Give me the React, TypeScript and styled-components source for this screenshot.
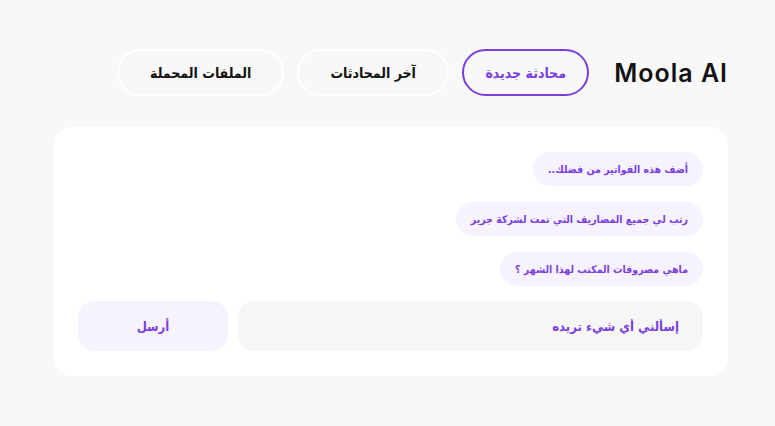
import React from 'react';
import styled, { createGlobalStyle } from 'styled-components';

const GlobalStyle = createGlobalStyle`
  html, body {
    margin: 0;
    padding: 0;
    background-color: #f8f8f8;
    font-family: 'DejaVu Sans Condensed', 'DejaVu Sans', sans-serif;
  }
`;

const messages = [
  'أضف هذه الفواتير من فضلك..',
  'رتب لي جميع المصاريف التي تمت لشركة جرير',
  'ماهي مصروفات المكتب لهذا الشهر ؟'
];

const navItems = [
  { label: 'محادثة جديدة', width: 127, active: true },
  { label: 'آخر المحادثات', width: 152, active: false },
  { label: 'الملفات المحملة', width: 167, active: false }
];

function App() {
  return (
    <>
      <GlobalStyle />
      <Page>
        <Header>
          <Logo>Moola AI</Logo>
          {navItems.map((item) => (
            <NavButton key={item.label} $active={item.active} $width={item.width}>
              {item.label}
            </NavButton>
          ))}
        </Header>
        <ChatCard>
          <MessageList>
            {messages.map((text) => (
              <Bubble key={text}>{text}</Bubble>
            ))}
          </MessageList>
          <InputRow>
            <PromptInput placeholder='إسألني أي شيء تريده' />
            <SendButton>أرسل</SendButton>
          </InputRow>
        </ChatCard>
      </Page>
    </>
  );
}
export default App;

const Page = styled.main`
  direction: rtl;
  display: flex;
  flex-direction: column;
  gap: 31px;
  width: 674px;
  margin-left: 54px;
  padding-top: 49px;
`;

const Header = styled.header`
  display: flex;
  align-items: center;
  gap: 13px;
`;

const Logo = styled.h1`
  direction: ltr;
  margin: 0 0 0 12px;
  color: #111;
  font-family: 'Inter', sans-serif;
  font-size: 25px;
  font-weight: 600;
  letter-spacing: 1px;
`;

const NavButton = styled.button<{ $active?: boolean; $width: number }>`
  width: ${(props) => props.$width}px;
  height: 47px;
  padding: 0;
  background-color: transparent;
  border: 2px solid ${(props) => (props.$active ? '#7a3fe0' : '#ffffff')};
  border-radius: 24px;
  color: ${(props) => (props.$active ? '#7a3fe0' : '#111')};
  font-family: 'DejaVu Sans Condensed', 'DejaVu Sans', sans-serif;
  font-size: 14px;
  font-weight: 700;
  cursor: pointer;
`;

const ChatCard = styled.section`
  display: flex;
  flex-direction: column;
  gap: 15px;
  padding: 25px 25px 25px 24px;
  background-color: #fff;
  border-radius: 18px;
`;

const MessageList = styled.div`
  display: flex;
  flex-direction: column;
  align-items: flex-start;
  gap: 16px;
`;

const Bubble = styled.div`
  height: 34px;
  display: flex;
  align-items: center;
  padding: 0 15px;
  background-color: #f6f2fe;
  border-radius: 17px;
  color: #7a3fe0;
  font-family: 'DejaVu Sans Condensed', 'DejaVu Sans', sans-serif;
  font-size: 10.5px;
  font-weight: 700;
`;

const InputRow = styled.div`
  display: flex;
  gap: 10px;
  height: 50px;
`;

const PromptInput = styled.input`
  flex: 1;
  padding: 0 24px;
  background-color: #f6f6f6;
  border: none;
  border-radius: 16px;
  outline: none;
  font-family: 'DejaVu Sans Condensed', 'DejaVu Sans', sans-serif;
  font-size: 13px;
  font-weight: 700;
  color: #7a3fe0;
  &::placeholder {
    color: #7a3fe0;
    opacity: 1;
  }
`;

const SendButton = styled.button`
  width: 150px;
  background-color: #f6f2fe;
  border: none;
  border-radius: 16px;
  color: #7a3fe0;
  font-family: 'DejaVu Sans Condensed', 'DejaVu Sans', sans-serif;
  font-size: 13px;
  font-weight: 700;
  cursor: pointer;
`;
